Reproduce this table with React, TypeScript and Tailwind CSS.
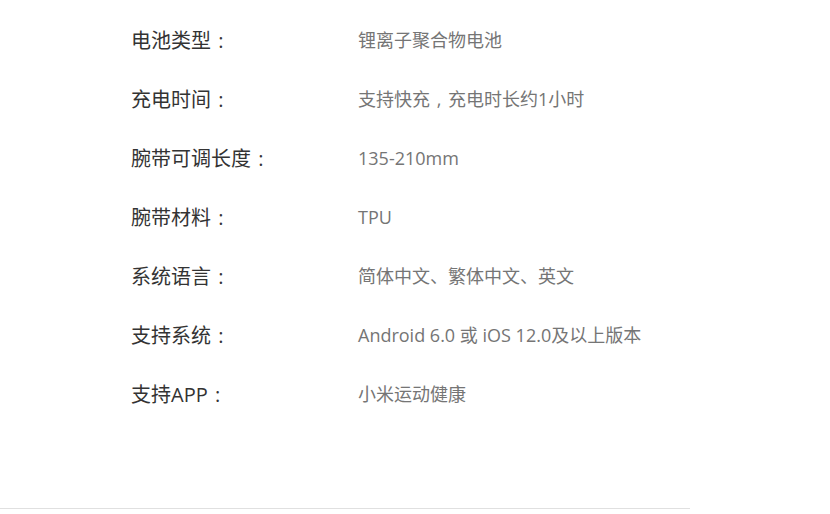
import React from "react";

const rows: [string, string][] = [
  ["电池类型：", "锂离子聚合物电池"],
  ["充电时间：", "支持快充，充电时长约1小时"],
  ["腕带可调长度：", "135-210mm"],
  ["腕带材料：", "TPU"],
  ["系统语言：", "简体中文、繁体中文、英文"],
  ["支持系统：", "Android 6.0 或 iOS 12.0及以上版本"],
  ["支持APP：", "小米运动健康"],
];

function Txt({ s }: { s: string }) {
  const parts = s.split(/([：，])/);
  return (
    <>
      {parts.map((p, i) =>
        p === "：" ? (
          <span key={i} className="inline-block w-[1em] text-center">:</span>
        ) : p === "，" ? (
          <span key={i} className="inline-block w-[1em] text-center">,</span>
        ) : (
          <span key={i}>{p}</span>
        )
      )}
    </>
  );
}

export default function App() {
  return (
    <div
      className="w-[830px] h-[514px] bg-white overflow-hidden"
      style={{ fontFamily: '"Open Sans", "Noto Sans CJK SC", sans-serif' }}
    >
      <div className="w-[690px] h-[509px] border-b border-[#e0e0e0] pt-[11px]">
        {rows.map(([k, v]) => (
          <div key={k} className="flex items-center h-[59px] pl-[131px]">
            <div className="w-[227px] text-[20px] text-[#333333]">
              <Txt s={k} />
            </div>
            <div className="text-[18px] text-[#757575]">
              <Txt s={v} />
            </div>
          </div>
        ))}
      </div>
    </div>
  );
}
